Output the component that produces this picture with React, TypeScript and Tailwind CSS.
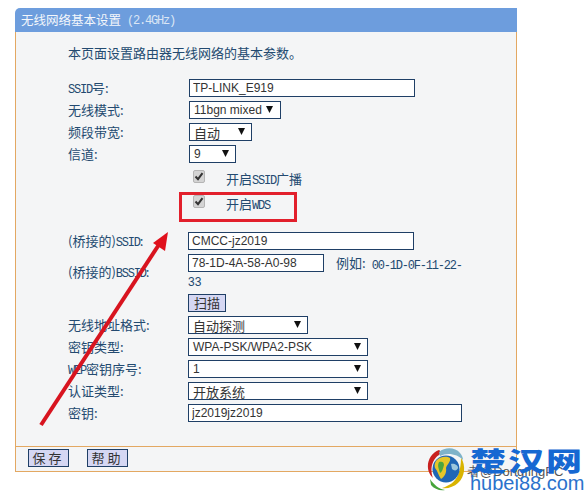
import type { ReactNode } from "react";

const CJK = "font-['Noto_Sans_CJK_SC','Liberation_Sans',sans-serif]";
const NAVY = "border border-[#1f3f66]";

function L({ children }: { children: ReactNode }) {
  // latin part of labels is narrow, like the bitmap font in the router page
  return <span className="font-['Liberation_Mono',monospace] text-[12px] tracking-[-1.2px]">{children}</span>;
}

function TextBox({ value, className }: { value: string; className: string }) {
  return (
    <input
      readOnly
      value={value}
      className={`h-[18px] bg-white ${NAVY} px-[3px] text-[12px] text-[#333] outline-none font-['Liberation_Sans',sans-serif] ${className}`}
    />
  );
}

function Select({ value, className, cjk }: { value: string; className: string; cjk?: boolean }) {
  return (
    <div className={`flex h-[18px] items-center justify-between whitespace-nowrap bg-white ${NAVY} pl-[4px] pr-[6px] text-[12px] text-[#333] ${cjk ? `${CJK} text-[13px]` : "font-['Liberation_Sans',sans-serif]"} ${className}`}>
      <span className={cjk ? "pt-[2px] leading-[18px]" : ""}>{value}</span>
      <svg width="7" height="7" viewBox="0 0 7 7" className="mb-[2px] shrink-0">
        <path d="M0 0H7L3.5 7Z" fill="#111" />
      </svg>
    </div>
  );
}

function Row({ label, children, labelWidth = "w-[120px]" }: { label: ReactNode; children: ReactNode; labelWidth?: string }) {
  return (
    <div className="flex h-[18px] items-center">
      <div className={`${labelWidth} shrink-0 whitespace-nowrap text-[13px] text-[#234a70] ${CJK}`}>{label}</div>
      {children}
    </div>
  );
}

function Check({ label, className }: { label: ReactNode; className: string }) {
  return (
    <div className={`flex h-[18px] items-start pl-[125px] ${className}`}>
      <div className="flex h-[13px] w-[12px] items-center justify-center rounded-[2px] border border-[#b5b5b5] bg-[#d4d4d4]">
        <svg width="10" height="9" viewBox="0 0 10 9">
          <path d="M1.5 4.5L4 7.2L8.5 1.2" fill="none" stroke="#333" strokeWidth="2" />
        </svg>
      </div>
      <div className={`ml-[21px] h-[18px] text-[13px] leading-[17px] text-[#234a70] ${CJK}`}>{label}</div>
    </div>
  );
}

function FootButton({ label }: { label: string }) {
  return (
    <button className={`block h-[18px] w-[41px] bg-[#d5d7f3] ${NAVY} text-[13px] leading-[16px] tracking-[3px] text-[#333] ${CJK}`}>
      {label}
    </button>
  );
}

function Logo() {
  return (
    <svg width="40" height="44" viewBox="0 0 40 44" className="absolute left-[427px] top-[447px]">
      <path d="M12 3C4 6 -1 15 1.5 24C2.5 27 4 29 6 31C3 24 4 13 12 8C14 6 14 4 12 3Z" fill="#c8201f" />
      <path d="M12 5C18 0 28 0 33 6C35 8 36 11 36 13C31 7 20 5 13 9Z" fill="#7fb3c9" />
      <path d="M34 11C39 18 38 30 31 36C27 40 20 42 15 41C22 39 28 35 31 28C33 23 34 17 34 11Z" fill="#d9b400" />
      <path d="M3 32C7 38 12 42 18 43C13 44 7 42 4 38Z" fill="#46a53a" />
      <circle cx="19" cy="22" r="13.5" fill="#1f66b5" />
      <path d="M9 14C13 9 20 9 23 11C24 15 20 17 19 21C20 26 17 30 14 32C11 28 11 24 8 21C7 18 8 16 9 14Z" fill="#e5c62a" />
      <path d="M12 15C15 14 17 15 17 18C16 22 15 25 13 26C12 22 10 19 12 15Z" fill="#4aa63f" />
      <path d="M24 17C27 16 31 18 31 21C30 24 27 24 25 22Z" fill="#9cc7dd" />
    </svg>
  );
}

export default function App() {
  return (
    <div className="relative h-[493px] w-[587px] overflow-hidden bg-white">
      <div className="ml-[15px] w-[502px] pt-[8px]">
        {/* title */}
        <div className={`flex h-[24px] items-center rounded-tl-[5px] bg-[#6d9ddd] pl-[6px] text-[12.5px] text-[#f4f7fb] ${CJK}`}>
          无线网络基本设置
          <span className="ml-[6px] text-[#dbe6f5]"><L>(2.4GHz)</L></span>
        </div>

        <div className="h-[414px] border-x border-[#e3a862] bg-[#f4f5f6] pl-[52px] pt-[12px]">
          <div className={`flex h-[18px] items-center text-[13px] text-[#234a70] ${CJK}`}>
            本页面设置路由器无线网络的基本参数。
          </div>

          <div className="mt-[17px] flex flex-col gap-[4px]">
            <Row label={<><L>SSID</L>号:</>} labelWidth="w-[121px]"><TextBox value="TP-LINK_E919" className="w-[226px]" /></Row>
            <Row label="无线模式:" labelWidth="w-[121px]"><Select value="11bgn mixed" className="w-[92px] pr-[7px]" /></Row>
            <Row label="频段带宽:" labelWidth="w-[121px]"><Select value="自动" cjk className="w-[63px]" /></Row>
            <Row label="信道:" labelWidth="w-[121px]"><Select value="9" className="w-[47px]" /></Row>
          </div>

          <Check className="mt-[7px]" label={<>开启<L>SSID</L>广播</>} />
          <Check className="mt-[7px]" label={<>开启<L>WDS</L></>} />

          <div className="mt-[19px]">
            <Row label={<>(桥接的)<L>SSID</L>:</>}><TextBox value="CMCC-jz2019" className="w-[226px]" /></Row>
          </div>

          {/* bssid wraps onto a second line */}
          <div className="mt-[4px] flex h-[36px] items-center">
            <div className={`w-[120px] shrink-0 whitespace-nowrap text-[13px] text-[#234a70] ${CJK}`}>(桥接的)<L>BSSID</L>:</div>
            <div className="flex h-full w-[290px] flex-col">
              <div className="flex h-[18px] items-center">
                <TextBox value="78-1D-4A-58-A0-98" className="w-[136px]" />
                <span className={`ml-[12px] text-[13px] text-[#234a70] ${CJK}`}>例如:</span>
                <span className="ml-[6px] text-[#234a70]"><L>00-1D-0F-11-22-</L></span>
              </div>
              <div className="mt-[3px] font-['Liberation_Sans',sans-serif] text-[12px] leading-[14px] text-[#234a70]">33</div>
            </div>
          </div>

          <div className="mt-[4px] flex pl-[120px]">
            <button className={`block h-[18px] w-[38px] bg-[#d5d7f3] ${NAVY} text-[13px] leading-[16px] text-[#333] ${CJK}`}>扫描</button>
          </div>

          <div className="mt-[4px] flex flex-col gap-[4px]">
            <Row label="无线地址格式:"><Select value="自动探测" cjk className="w-[120px]" /></Row>
            <Row label="密钥类型:"><Select value="WPA-PSK/WPA2-PSK" className="w-[180px]" /></Row>
            <Row label={<><L>WEP</L>密钥序号:</>}><Select value="1" className="w-[180px]" /></Row>
            <Row label="认证类型:"><Select value="开放系统" cjk className="w-[180px]" /></Row>
            <Row label="密钥:"><TextBox value="jz2019jz2019" className="w-[274px]" /></Row>
          </div>
        </div>

        {/* footer */}
        <div className="flex h-[26px] items-start gap-[18px] border border-[#e3a862] bg-[#f4f5f6] pl-[12px] pt-[2px]">
          <FootButton label="保存" />
          <FootButton label="帮助" />
        </div>
      </div>

      {/* annotations over the page */}
      <div className="absolute left-[179px] top-[192px] h-[30px] w-[118px] border-[3px] border-[#e2202c]" />
      <svg width="587" height="493" className="pointer-events-none absolute left-0 top-0">
        <path d="M41 425L160 243" stroke="#d8141f" strokeWidth="4" fill="none" />
        <path d="M168 232L153 243L165 251Z" fill="#e0101c" />
      </svg>

      <div className="absolute left-[467px] top-[464px] font-['Liberation_Sans',sans-serif] text-[13px] leading-[16px] text-[#555]">者@DongIingPC</div>
      <Logo />
      <div className={`absolute left-[470px] top-[439px] w-[120px] origin-center scale-y-[0.72] whitespace-nowrap text-[36px] font-black leading-[40px] tracking-[2px] text-[#1668d2] ${CJK}`}>楚汉网</div>
      <div className="absolute left-[470px] top-[472px] font-['Liberation_Sans',sans-serif] text-[20px] leading-[22px] text-[#2a72cc]">hubei88.com</div>
    </div>
  );
}
